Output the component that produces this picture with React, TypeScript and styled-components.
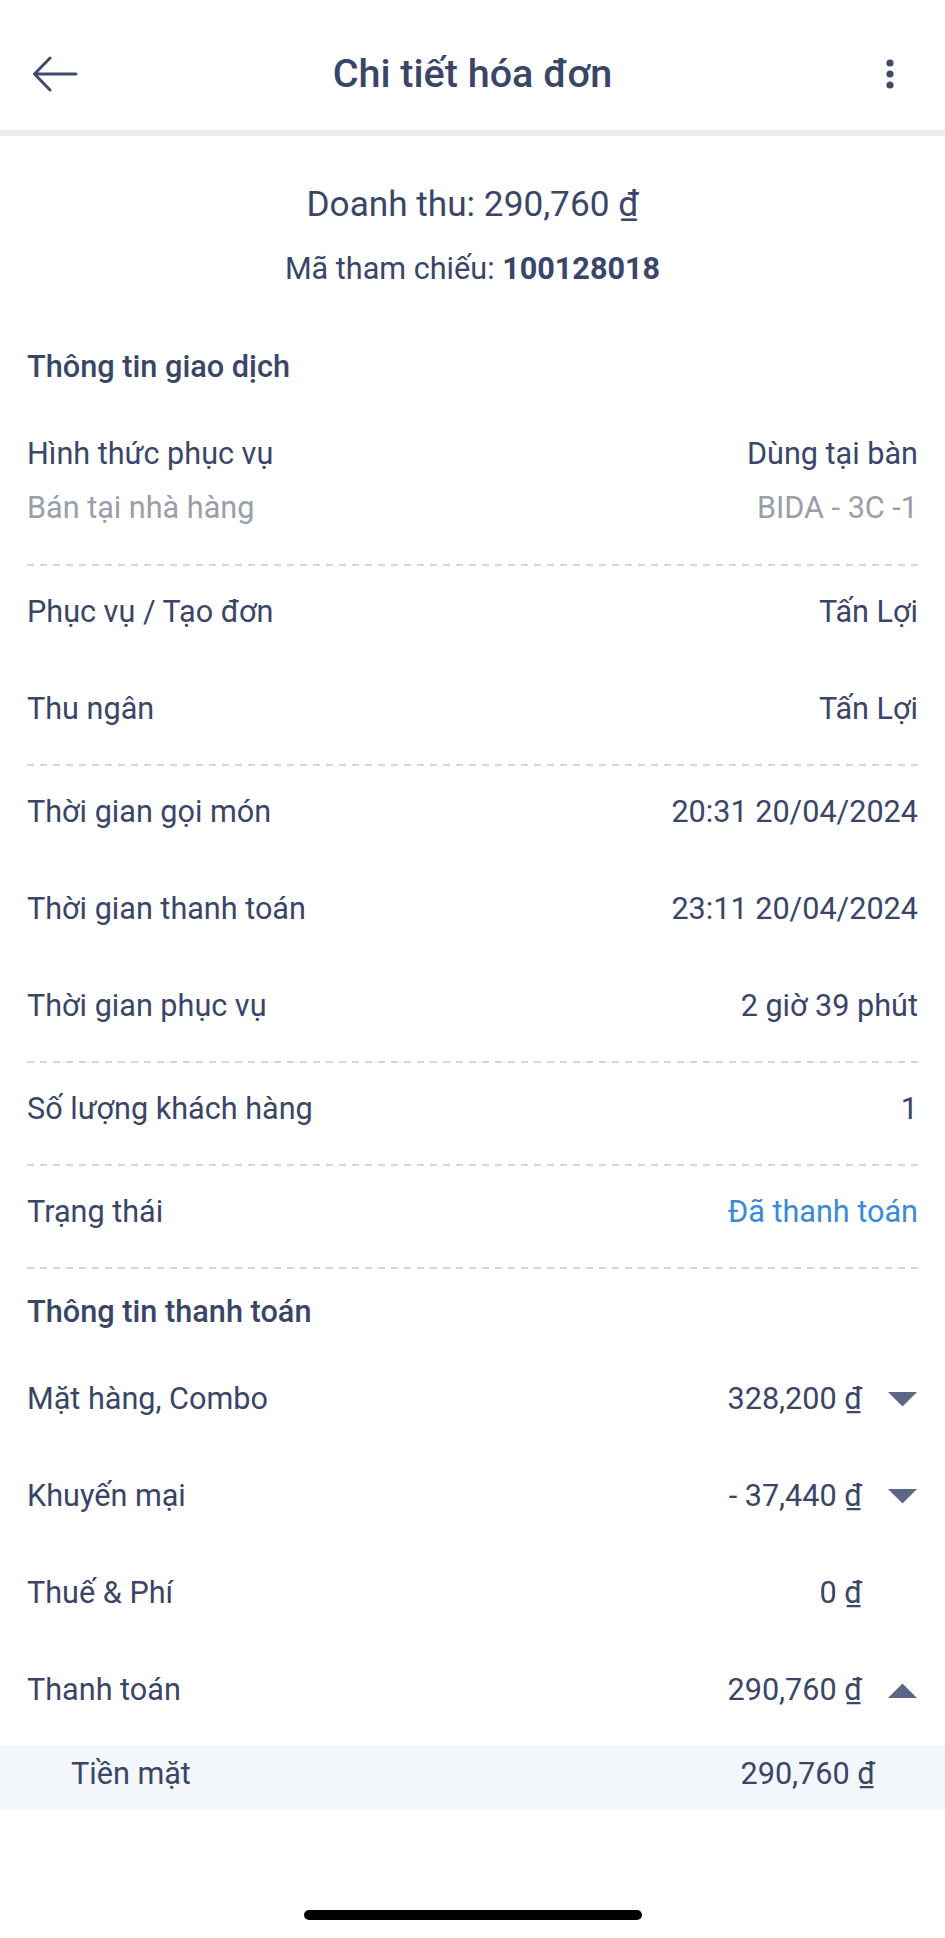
import styled, { createGlobalStyle } from 'styled-components'

const GlobalStyle = createGlobalStyle`
  html, body {
    margin: 0;
    padding: 0;
    background: #ffffff;
  }
  body {
    font-family: Roboto, 'Noto Sans', 'Liberation Sans', sans-serif;
    color: #3a4567;
  }
  * {
    box-sizing: border-box;
  }
`

const Page = styled.div`
  width: 945px;
  min-height: 1938px;
  display: flex;
  flex-direction: column;
  background: #ffffff;
`

const Header = styled.header`
  height: 136px;
  padding: 18px 32px 0;
  display: grid;
  grid-template-columns: 1fr auto 1fr;
  align-items: center;
  border-bottom: 6px solid #ececf1;
`

const IconButton = styled.button<{ $align: 'start' | 'end' }>`
  justify-self: ${(p) => p.$align};
  width: 46px;
  height: 44px;
  padding: 0;
  border: 0;
  background: transparent;
  display: flex;
  align-items: center;
  justify-content: ${(p) => (p.$align === 'start' ? 'flex-start' : 'center')};
  color: #3f4a6c;
`

const Title = styled.h1`
  margin: 0;
  font-size: 39.5px;
  font-weight: 500;
  line-height: 44px;
  color: #3a4567;
`

const Summary = styled.section`
  padding: 48px 0 37px;
  display: flex;
  flex-direction: column;
  align-items: center;
  gap: 25px;
`

const Revenue = styled.div`
  font-size: 35.2px;
  line-height: 40px;
`

const Reference = styled.div`
  font-size: 30.6px;
  line-height: 40px;

  b {
    font-weight: 700;
  }
`

const Section = styled.section`
  padding: 0 27px;
  display: flex;
  flex-direction: column;
`

const SectionTitle = styled.h2`
  margin: 0;
  height: 80px;
  display: flex;
  align-items: center;
  font-size: 30.7px;
  font-weight: 500;
`

const Row = styled.div`
  min-height: 97px;
  padding-bottom: 10px;
  display: flex;
  align-items: center;
  justify-content: space-between;
  font-size: 30.6px;
  line-height: 40px;
`

const DoubleRow = styled.div`
  padding: 28px 0 34px;
  display: flex;
  flex-direction: column;
  gap: 14px;
  font-size: 30.6px;
  line-height: 40px;
`

const Line = styled.div<{ $muted?: boolean }>`
  display: flex;
  justify-content: space-between;
  color: ${(p) => (p.$muted ? '#9a9ea8' : '#3a4567')};
`

const Value = styled.span<{ $tone?: 'link' }>`
  color: ${(p) => (p.$tone === 'link' ? '#3a8ad9' : 'inherit')};
`

const Dash = styled.div`
  height: 2px;
  margin: 2px 0;
  background: repeating-linear-gradient(
    to right,
    #d6d7db 0 7px,
    transparent 7px 13px
  );
`

const PayRow = styled.div`
  height: 97px;
  padding-bottom: 1px;
  display: grid;
  grid-template-columns: 1fr auto 56px;
  align-items: center;
  font-size: 30.6px;
  line-height: 40px;
`

const Toggle = styled.span`
  justify-self: end;
  display: flex;
  align-items: center;
  color: #5c6788;
`

const SubRow = styled.div`
  margin-top: 6px;
  height: 64px;
  padding: 0 70px 6px 71px;
  display: flex;
  align-items: center;
  justify-content: space-between;
  background: #f3f7fc;
  font-size: 30.6px;
  line-height: 40px;
`

const Spacer = styled.div`
  flex: 1;
`

const HomeBar = styled.div`
  align-self: center;
  width: 338px;
  height: 10px;
  margin-bottom: 18px;
  border-radius: 5px;
  background: #000000;
`

const BackIcon = () => (
  <svg width="46" height="36" viewBox="0 0 46 36" fill="none">
    <path
      d="M44 18H3M18 2L2.5 18L18 34"
      stroke="currentColor"
      strokeWidth="3"
      strokeLinecap="round"
      strokeLinejoin="round"
    />
  </svg>
)

const MoreIcon = () => (
  <svg width="10" height="32" viewBox="0 0 10 32" fill="currentColor">
    <circle cx="5" cy="5" r="3.6" />
    <circle cx="5" cy="16" r="3.6" />
    <circle cx="5" cy="27" r="3.6" />
  </svg>
)

const Caret = ({ up }: { up?: boolean }) => (
  <svg width="31" height="17" viewBox="0 0 31 17" fill="currentColor">
    {up ? <path d="M15.5 1.5L30 16H1Z" /> : <path d="M1 1H30L15.5 15.5Z" />}
  </svg>
)

const details = [
  { label: 'Phục vụ / Tạo đơn', value: 'Tấn Lợi' },
  { label: 'Thu ngân', value: 'Tấn Lợi', dash: true },
  { label: 'Thời gian gọi món', value: '20:31 20/04/2024' },
  { label: 'Thời gian thanh toán', value: '23:11 20/04/2024' },
  { label: 'Thời gian phục vụ', value: '2 giờ 39 phút', dash: true },
  { label: 'Số lượng khách hàng', value: '1', dash: true },
]

const payments = [
  { label: 'Mặt hàng, Combo', value: '328,200 ₫', caret: 'down' },
  { label: 'Khuyến mại', value: '- 37,440 ₫', caret: 'down' },
  { label: 'Thuế & Phí', value: '0 ₫' },
  { label: 'Thanh toán', value: '290,760 ₫', caret: 'up' },
]

export function App() {
  return (
    <Page>
      <GlobalStyle />
      <Header>
        <IconButton $align="start" aria-label="Quay lại">
          <BackIcon />
        </IconButton>
        <Title>Chi tiết hóa đơn</Title>
        <IconButton $align="end" aria-label="Thêm">
          <MoreIcon />
        </IconButton>
      </Header>

      <Summary>
        <Revenue>Doanh thu: 290,760 ₫</Revenue>
        <Reference>
          Mã tham chiếu: <b>100128018</b>
        </Reference>
      </Summary>

      <Section>
        <SectionTitle>Thông tin giao dịch</SectionTitle>
        <DoubleRow>
          <Line>
            <span>Hình thức phục vụ</span>
            <span>Dùng tại bàn</span>
          </Line>
          <Line $muted>
            <span>Bán tại nhà hàng</span>
            <span>BIDA - 3C -1</span>
          </Line>
        </DoubleRow>
        <Dash />
        {details.map((d) => (
          <div key={d.label}>
            <Row>
              <span>{d.label}</span>
              <Value>{d.value}</Value>
            </Row>
            {d.dash && <Dash />}
          </div>
        ))}
        <Row>
          <span>Trạng thái</span>
          <Value $tone="link">Đã thanh toán</Value>
        </Row>
        <Dash />

        <SectionTitle>Thông tin thanh toán</SectionTitle>
        {payments.map((p) => (
          <PayRow key={p.label}>
            <span>{p.label}</span>
            <Value>{p.value}</Value>
            <Toggle>{p.caret && <Caret up={p.caret === 'up'} />}</Toggle>
          </PayRow>
        ))}
      </Section>
      <SubRow>
        <span>Tiền mặt</span>
        <Value>290,760 ₫</Value>
      </SubRow>

      <Spacer />
      <HomeBar />
    </Page>
  )
}

export default App
